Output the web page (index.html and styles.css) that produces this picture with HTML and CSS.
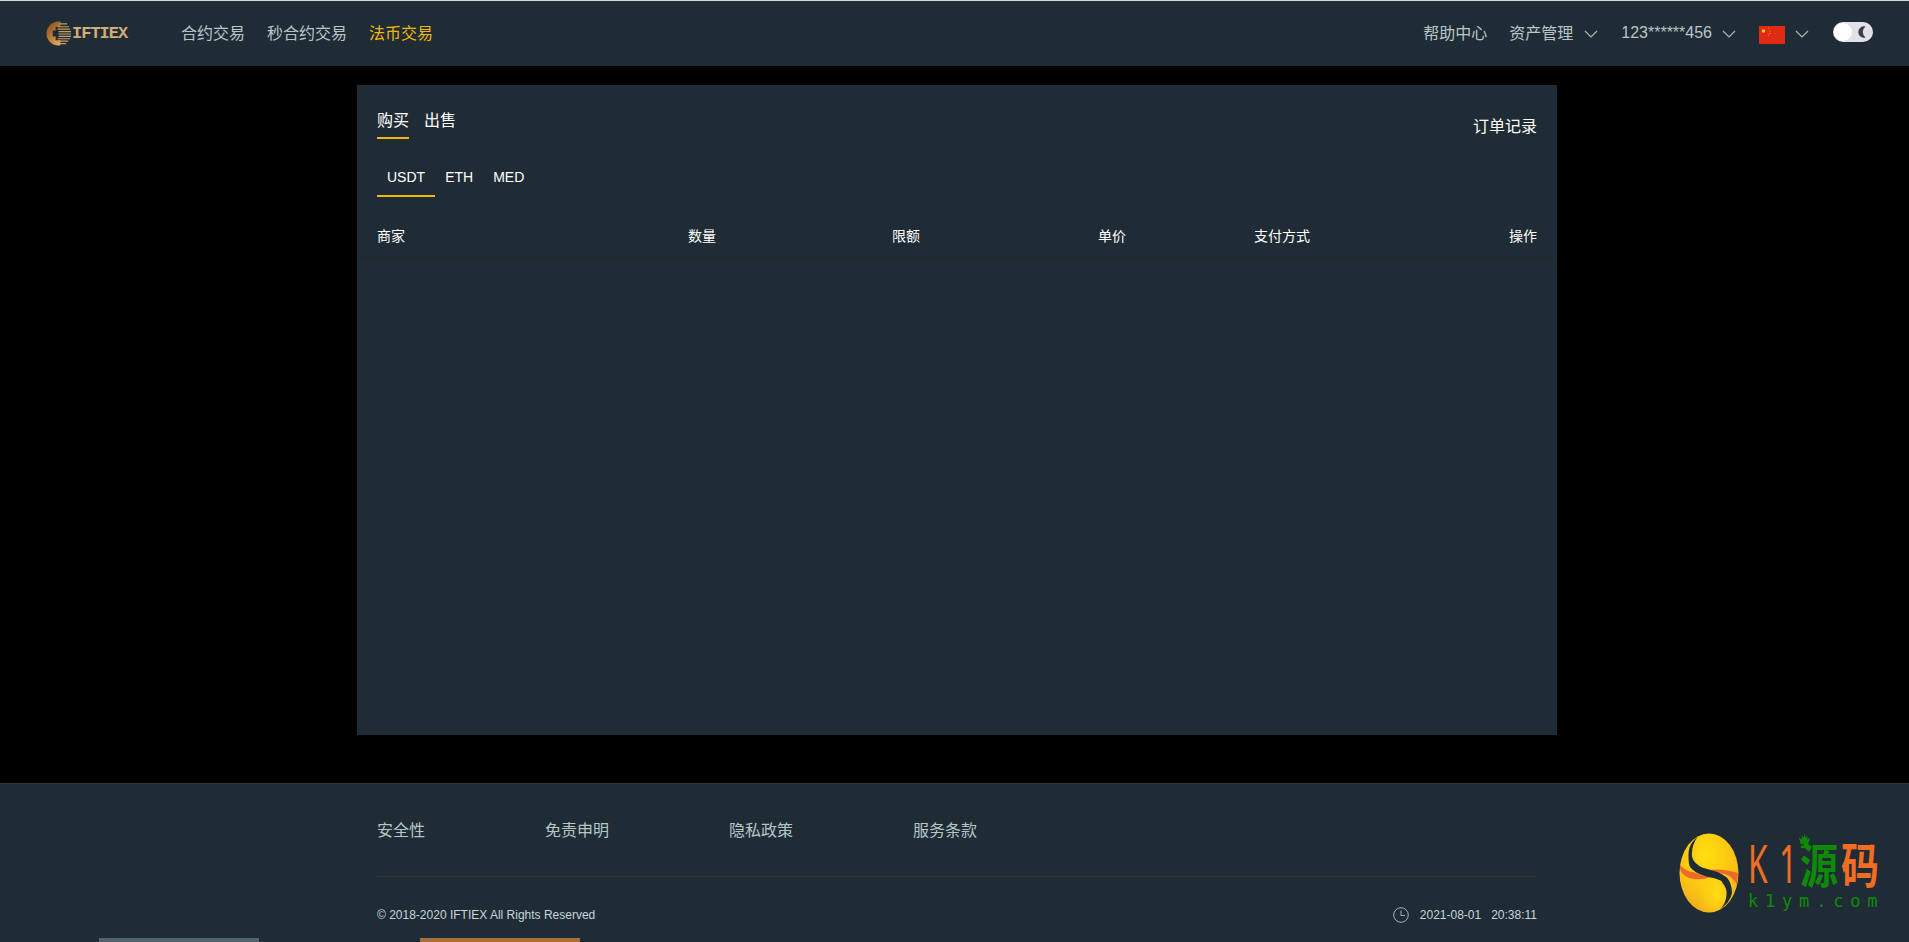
FILE: index.html
```html
<!DOCTYPE html>
<html lang="zh-CN">
<head>
<meta charset="utf-8">
<title>IFTIEX</title>
<link rel="stylesheet" href="styles.css">
</head>
<body>
<header class="topbar">
  <div class="brand">
    <svg class="brand-mark" viewBox="0 0 26 26" width="25" height="25" aria-hidden="true">
      <defs>
        <linearGradient id="goldA" x1="0" y1="0" x2="1" y2="1"><stop offset="0" stop-color="#7c4a1c"/><stop offset=".5" stop-color="#c9853a"/><stop offset="1" stop-color="#f0cf96"/></linearGradient>
      </defs>
      <circle cx="13" cy="13" r="12.5" fill="url(#goldA)"/>
      <path d="M15 1h11v25H15v-6h-5v-4H7v-6h3V6h5z" fill="#1f2c36"/>
      <path d="M14 3h8M12 6h12M12 8.500h13M13 11h13M13 13.500h13M13 16h13M12 18.500h13M12 21h11M14 23.500h7" stroke="#c99d62" stroke-width="1.200" fill="none"/>
    </svg>
    <span class="brand-name">IFTIEX</span>
  </div>
  <nav class="nav">
    <a class="nav-link">合约交易</a>
    <a class="nav-link">秒合约交易</a>
    <a class="nav-link nav-active">法币交易</a>
  </nav>
  <div class="top-right">
    <a class="nav-link">帮助中心</a>
    <a class="nav-link drop">资产管理
      <svg class="chev" viewBox="0 0 14 8" width="14" height="8"><path d="M1 1l6 6 6-6" fill="none" stroke="currentColor" stroke-width="1.200"/></svg></a>
    <a class="nav-link drop user">123******456
      <svg class="chev chev-tight chev-user" viewBox="0 0 14 8" width="14" height="8"><path d="M1 1l6 6 6-6" fill="none" stroke="currentColor" stroke-width="1.200"/></svg></a>
    <a class="nav-link drop lang">
      <svg class="flag" viewBox="0 0 26 18" width="26" height="18"><rect width="26" height="18" fill="#e12a12"/><circle cx="4.500" cy="5" r="1.800" fill="#f7d21e"/><path d="M9 2l.8.400M11 4.500v1M11 7v1M9 9.500l.8-.4" stroke="#f0a81a" stroke-width="1"/></svg>
      <svg class="chev chev-tight" viewBox="0 0 14 8" width="14" height="8"><path d="M1 1l6 6 6-6" fill="none" stroke="currentColor" stroke-width="1.200"/></svg></a>
    <span class="toggle">
      <span class="knob"></span>
      <svg class="moon" viewBox="0 0 12 12" width="12" height="12"><path d="M8.500 .5A5.700 5.700 0 1 0 8.500 11.500 7 7 0 0 1 8.500 .5z" fill="#3a3f4a"/></svg>
    </span>
  </div>
</header>

<main class="main">
  <section class="card">
    <div class="card-head">
      <div class="side-tabs">
        <a class="side-tab side-on">购买</a>
        <a class="side-tab">出售</a>
      </div>
      <a class="records">订单记录</a>
    </div>
    <div class="coin-tabs">
      <a class="coin coin-on">USDT</a>
      <a class="coin">ETH</a>
      <a class="coin">MED</a>
    </div>
    <div class="thead">
      <span>商家</span><span>数量</span><span>限额</span><span>单价</span><span>支付方式</span><span>操作</span>
    </div>
  </section>
</main>

<footer class="footer">
  <div class="foot-inner">
    <div class="foot-links">
      <a>安全性</a><a>免责申明</a><a>隐私政策</a><a>服务条款</a>
    </div>
    <div class="foot-base">
      <span>© 2018-2020 IFTIEX All Rights Reserved</span>
      <span class="clock">
        <svg viewBox="0 0 16 16" width="16" height="16"><circle cx="8" cy="8" r="7.300" fill="none" stroke="#9fb4b8"/><path d="M8 3.500V8.500h4" fill="none" stroke="#9fb4b8"/></svg>
        <span class="date">2021-08-01</span><span>20:38:11</span>
      </span>
    </div>
  </div>
  <i class="strip strip-grey"></i>
  <i class="strip strip-orange"></i>
  <div class="mark">
    <svg class="mark-egg" viewBox="0 0 60 80" width="60" height="80" aria-hidden="true">
      <defs>
        <radialGradient id="eggA" cx=".45" cy=".28" r=".8"><stop offset="0" stop-color="#ffdf0e"/><stop offset=".55" stop-color="#fbc514"/><stop offset="1" stop-color="#f2a51e"/></radialGradient>
        <radialGradient id="eggB" cx=".65" cy=".78" r=".35"><stop offset="0" stop-color="#ffe010" stop-opacity=".9"/><stop offset="1" stop-color="#ffe010" stop-opacity="0"/></radialGradient>
      </defs>
      <ellipse cx="30" cy="40" rx="29.500" ry="39.500" fill="url(#eggA)"/>
      <ellipse cx="30" cy="40" rx="29.500" ry="39.500" fill="url(#eggB)"/>
      <path d="M1 32C5 36 9 39 14 39C20 41 26 43 32 44C24 47 14 47 8 44C4 42 2 39 1 36z" fill="#ee6a2a"/>
      <path d="M29 37C38 35.500 50 37 59 40L58 52C55 46 50 42 45 41C40 40 34 39 29 37z" fill="#ee6a2a"/>
      <path d="M18.500 4C12 9 9.500 15 9.500 22C9.500 29 10 33 12 35C16 40 24 42.500 30 44C38 46 43 47 43.500 50C47 54 48 58 47.500 62C47 68 45 72 41.500 76C47 72 51.500 67 53 60C53 52 50 46 46.500 43.500C41 39.500 36 38 30 36.500C25 35 21 34 18.500 31.500C14 28 12.500 24 13 20C13 14 15 9 18.500 4z" fill="#1f2c36"/>
    </svg>
    <div class="mark-text">
      <div class="mark-title">
        <span class="k1">K<span class="k1-one">1</span></span><span class="cjk yuan">源</span><span class="cjk ma">码</span>
        <svg class="crown" viewBox="0 0 14 16" width="13" height="15" aria-hidden="true"><path d="M7 0l1 4 2-2 0 4 3-2-2 7H3L1 4l3 2 0-4 2 2zM3 12.500h8V15H3z" fill="#0f8a08"/></svg>
      </div>
      <div class="mark-url">k1ym.com</div>
    </div>
  </div>
</footer>
</body>
</html>
```

FILE: styles.css
```css
* { box-sizing: border-box; }
html, body { margin: 0; padding: 0; }
body {
  width: 1909px;
  height: 942px;
  overflow: hidden;
  background: #000;
  color: #fff;
  font-family: "Liberation Sans", "Noto Sans CJK SC", sans-serif;
}
a { color: inherit; text-decoration: none; }

.topbar {
  height: 66px;
  border-top: 1px solid #d5d8da;
  background: #1f2c36;
  display: flex;
  align-items: center;
  padding: 0 36px 0 46px;
  font-size: 16px;
}
.brand { display: flex; align-items: center; width: 135px; height: 26px; }
.brand-mark { flex: none; }
.brand-name {
  margin-left: 1px;
  font: bold 17px/20px "Liberation Mono", monospace;
  letter-spacing: -1px;
  color: #d1ad78;
}
.nav { display: flex; gap: 22px; }
.nav-link { color: #b9c6c8; display: flex; align-items: center; white-space: nowrap; padding-bottom: 4px; }
.nav-active { color: #f0b90b; }
.top-right { margin-left: auto; display: flex; align-items: center; gap: 22px; }
.chev { margin-left: 11px; margin-top: 4px; color: #a9b8bb; }
.chev-tight { margin-left: 10px; }
.chev-user { margin-top: 2px; }
.user { margin-left: 1px; padding-bottom: 2px; }
.lang { margin-left: 1px; }
.flag { display: block; margin-top: 6px; }
.toggle {
  width: 40px;
  height: 20px;
  border-radius: 10px;
  background: #e0e1e9;
  position: relative;
  margin-left: 2px;
  margin-bottom: 3px;
  display: block;
}
.knob { position: absolute; left: 1px; top: 1px; width: 18px; height: 18px; border-radius: 50%; background: #fff; }
.moon { position: absolute; left: 24px; top: 4px; }

.main { height: 717px; padding-top: 19px; }
.card {
  width: 1200px;
  height: 650px;
  margin-left: 357px;
  background: #1f2c36;
}
.card-head {
  display: flex;
  justify-content: space-between;
  padding: 16px 20px 0;
  height: 69px;
  font-size: 16px;
}
.side-tabs { display: flex; gap: 15px; align-items: flex-start; }
.side-tab { display: block; height: 38px; line-height: 40px; }
.side-on { border-bottom: 2px solid #f0b90b; }
.records { line-height: 52px; }
.coin-tabs { display: flex; padding: 0 20px; height: 43px; }
.coin { display: block; height: 43px; padding: 0 10px; font-size: 14px; line-height: 46px; }
.coin-on { border-bottom: 2px solid #f0b90b; }
.thead {
  display: grid;
  grid-template-columns: 311px 204px 206px 156px 1fr auto;
  height: 60px;
  padding: 0 20px 10px;
  align-items: end;
  font-size: 14px;
  line-height: 20px;
  border-bottom: 1px solid #23262a;
}
.thead span { display: block; }

.footer {
  position: relative;
  height: 159px;
  background: #1f2c36;
  border-top: 1px solid #33383c;
}
.foot-inner { width: 1160px; margin-left: 377px; }
.foot-links {
  display: flex;
  gap: 120px;
  height: 93px;
  padding-top: 35px;
  font-size: 16px;
  line-height: 23px;
  color: #b4c7c7;
  border-bottom: 1px solid #2e3338;
}
.foot-base {
  display: flex;
  justify-content: space-between;
  align-items: center;
  height: 76px;
  font-size: 12px;
  color: #c6d6da;
}
.clock { display: flex; align-items: center; }
.clock svg { margin-right: 11px; }
.date { margin-right: 10px; }
.strip { position: absolute; bottom: 0; height: 4px; }
.strip-grey { left: 99px; width: 160px; background: #52626a; }
.strip-orange { left: 420px; width: 160px; background: #a96f37; }

.mark { position: absolute; left: 1679px; top: 49px; display: flex; }
.mark-egg { flex: none; }
.mark-text { margin-left: 9px; width: 135px; }
.mark-title {
  position: relative;
  display: flex;
  align-items: center;
  height: 59px;
}
.k1 {
  display: block;
  flex: none;
  width: 52px;
  color: #f26c22;
  font: 400 53px/40px "Noto Sans", sans-serif;
  transform: scaleX(.6);
  transform-origin: left center;
  white-space: nowrap;
}
.k1-one { margin-left: 19px; }
.cjk {
  display: block;
  flex: none;
  width: 41px;
  font: 700 38px/38px "Noto Sans CJK SC", sans-serif;
  transform: scaleY(1.25);
  transform-origin: center;
}
.yuan { color: #0f8a08; }
.ma { color: #f26c22; }
.crown { position: absolute; left: 50px; top: 1px; }
.mark-url {
  color: #0f8a08;
  font: 17px/18px "DejaVu Sans Mono", monospace;
  letter-spacing: 6.800px;
  white-space: nowrap;
}
```
